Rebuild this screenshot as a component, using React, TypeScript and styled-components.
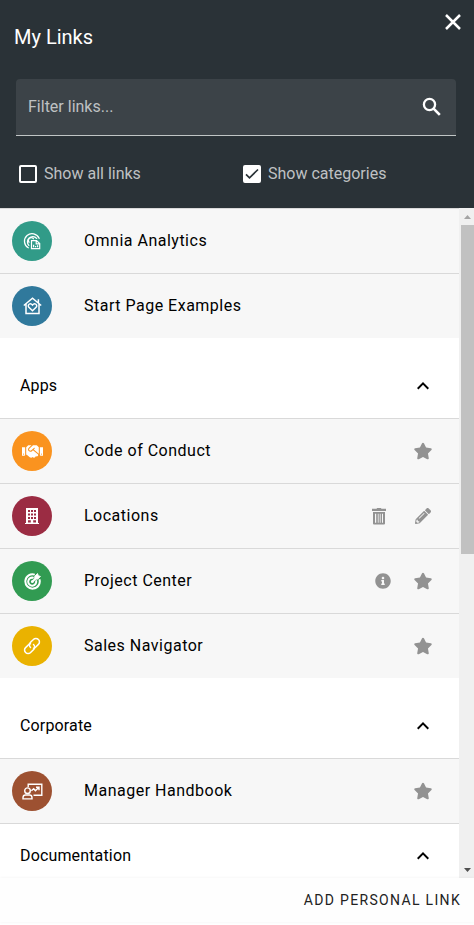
import React from "react";
import styled, { createGlobalStyle } from "styled-components";
import { FaHandshake, FaStar, FaPencilAlt, FaInfoCircle } from "react-icons/fa";
import { MdKeyboardArrowUp } from "react-icons/md";

const GlobalStyle = createGlobalStyle`
  *, *::before, *::after { box-sizing: border-box; }
  body { margin: 0; background: #fff; font-family: Roboto, "Liberation Sans", sans-serif; }
  svg { display: block; }
`;

const Panel = styled.main`
  width: 474px;
  height: 925px;
  display: flex;
  flex-direction: column;
  background: #fff;
  overflow: hidden;
`;

const Header = styled.header`
  position: relative;
  flex: none;
  height: 208px;
  padding: 24px 18px 0 14px;
  background: #2a3237;
  color: #fff;
`;

const Title = styled.h1`
  margin: 0;
  font-size: 20px;
  line-height: 26px;
  font-weight: 400;
`;

const CloseButton = styled.button`
  position: absolute;
  top: 9px;
  right: 8px;
  padding: 0;
  border: 0;
  background: none;
  color: #fff;
`;

const Search = styled.div`
  display: flex;
  align-items: center;
  justify-content: space-between;
  height: 57px;
  margin: 29px 0 0 2px;
  padding: 0 12px;
  border-bottom: 1px solid #c0c5c5;
  border-radius: 4px 4px 0 0;
  background: #3c4348;
  color: #fff;
`;

const Placeholder = styled.span`
  color: #bfc1c3;
  font-size: 16px;
  line-height: 20px;
  margin-top: -1px;
`;

const Options = styled.div`
  display: grid;
  grid-template-columns: 224px 1fr;
  margin: 28px 0 0 5px;
`;

const Option = styled.div`
  display: flex;
  align-items: center;
  gap: 7px;
  height: 20px;
  color: #bfc1c3;
  font-size: 16px;
  line-height: 20px;
`;

const Box = styled.span<{ $checked?: boolean }>`
  display: flex;
  align-items: center;
  justify-content: center;
  width: 18px;
  height: 18px;
  border: 2px solid #fff;
  border-radius: 2px;
  background: ${(p) => (p.$checked ? "#fff" : "transparent")};
  color: #2a3237;
`;

const Body = styled.div`
  display: flex;
  flex: none;
  height: 670px;
`;

const List = styled.div`
  width: 459px;
  overflow: hidden;
`;

const Group = styled.section`
  & + & { padding-top: 16px; }
  &:last-child { padding-top: 0; border-top: 1px solid #d9d9d9; }
`;

const GroupHeader = styled.div`
  display: flex;
  align-items: center;
  justify-content: space-between;
  height: 64px;
  padding: 0 24px 0 20px;
  color: #000;
  font-size: 16px;
`;

const Label = styled.span`
  margin-top: -2px;
  letter-spacing: 0.15px;
`;

const Row = styled.div`
  display: flex;
  align-items: center;
  height: 65px;
  padding: 0 27px 0 12px;
  border-top: 1px solid #d9d9d9;
  background: #f7f7f7;
`;

const Badge = styled.span<{ $color: string }>`
  display: flex;
  align-items: center;
  justify-content: center;
  width: 40px;
  height: 40px;
  border-radius: 50%;
  background: ${(p) => p.$color};
  color: #fff;
`;

const Name = styled.span`
  flex: 1;
  margin-left: 32px;
  font-size: 16px;
  line-height: 20px;
  letter-spacing: 0.5px;
  color: #000;
`;

const Actions = styled.span`
  display: flex;
  align-items: center;
  color: #929292;
`;

const Action = styled.span<{ $gap?: number }>`
  margin-right: ${(p) => p.$gap ?? 0}px;
`;

const Scrollbar = styled.div`
  display: flex;
  flex-direction: column;
  width: 15px;
  padding-left: 2px;
  background: #f0f0f0;
`;

const ArrowSlot = styled.div`
  display: flex;
  align-items: center;
  justify-content: center;
  height: 17px;
`;

const Thumb = styled.div`
  height: 329px;
  margin-bottom: auto;
  background: #c1c1c1;
`;

const Footer = styled.footer`
  position: relative;
  flex: none;
  display: flex;
  align-items: center;
  justify-content: flex-end;
  height: 44px;
  padding-right: 13px;
  background: #fefefe;
  box-shadow: 0 0 3px rgba(0, 0, 0, 0.06);
`;

const AddLink = styled.button`
  padding: 0;
  border: 0;
  background: none;
  color: #222;
  font: 400 14px/20px Roboto, sans-serif;
  letter-spacing: 1.33px;
`;

const Line = styled.svg.attrs({ fill: "none", stroke: "currentColor" })``;

const CloseIcon = () => (
  <Line width="26" height="26" viewBox="0 0 26 26" strokeWidth="2.5">
    <path d="M6 6l14 14M20 6 6 20" />
  </Line>
);

const SearchIcon = () => (
  <Line width="24" height="24" viewBox="0 0 24 24" strokeWidth="2.3">
    <circle cx="9.500" cy="9.500" r="5.600" />
    <path d="m13.600 13.600 6.200 6.200" strokeWidth="2.600" />
  </Line>
);

const AnalyticsIcon = () => (
  <Line width="18" height="18" viewBox="0 0 18 18" strokeWidth="1.3" strokeLinecap="round">
    <path d="M5.300 15.800A7.600 7.600 0 1 1 16.100 6.300M5.800 13.400a5.100 5.100 0 1 1 7.800-7M6 10.200a2.700 2.700 0 0 1 4.400-3.500" />
    <path d="M8.500 8.600h5l3.200 3v5.100H8.500zM13.200 8.600v3.200h3.500M10.600 15.200v-2.500M12.600 15.200v-1.300M14.600 15.200v-2" strokeLinecap="butt" strokeWidth="1.200" />
  </Line>
);

const HomeHeartIcon = () => (
  <Line width="19" height="18" viewBox="0 0 19 18" strokeWidth="1.5">
    <path d="M.8 8.500 9.500 1.200l8.700 7.300M3 6.800v9.700h13V6.800M15.400 6V2.200" />
    <path d="M9.500 13.800 5.900 10.300c-2-2.400 1.400-5 3.600-2.200 2.200-2.800 5.600-.2 3.600 2.200z" />
  </Line>
);

const BuildingIcon = () => (
  <svg width="14" height="16" viewBox="0 0 14 16" fill="currentColor">
    <path fillRule="evenodd" d="M1 0h12v15h1v1H0v-1h1zM3 2v2h2V2zM6 2v2h2V2zM9 2v2h2V2zM3 5.500v2h2v-2zM6 5.500v2h2v-2zM9 5.500v2h2v-2zM3 9v2h2V9zM6 9v2h2V9zM9 9v2h2V9zM3 12.300v2.200h2.800v-2.200zM8.200 12.300v2.200H11v-2.200z" />
  </svg>
);

const TargetIcon = () => (
  <Line width="17" height="17" viewBox="0 0 17 17" strokeWidth="2">
    <path d="M10.800 1.600A7.200 7.200 0 1 0 15.400 6.200M9.600 4.900A4 4 0 1 0 12 7.400M8.300 8.700l4-4" />
    <path d="m11 5.800-.300-2.400L13.600.6l.600 2.200 2.200.6-2.800 2.800z" fill="currentColor" strokeWidth="1" />
    <circle cx="8.300" cy="8.700" r="1.400" fill="currentColor" stroke="none" />
  </Line>
);

const ChainIcon = () => (
  <Line width="18" height="18" viewBox="0 0 18 18" strokeWidth="1.5" strokeLinecap="round">
    <path d="M7.500 10.500a3.400 3.400 0 0 1-.2-4.900l3.100-3.100a3.400 3.400 0 0 1 5 0 3.400 3.400 0 0 1 0 4.900l-2.900 2.900a3.400 3.400 0 0 1-2 .9" />
    <path d="M10.500 7.500a3.400 3.400 0 0 1 .2 4.900l-3.100 3.100a3.400 3.400 0 0 1-5 0 3.400 3.400 0 0 1 0-4.900l2.900-2.900a3.400 3.400 0 0 1 2-.9" />
  </Line>
);

const PresenterIcon = () => (
  <Line width="21" height="17" viewBox="0 0 21 17" strokeWidth="1.4">
    <path d="M6.200 4V1.200h13.600v11H11.500" />
    <circle cx="5.500" cy="7.700" r="2.800" />
    <path d="M1 15.900v-1.200c0-1.900 1-2.700 2.500-2.700h4c1.500 0 2.500.8 2.500 2.700v1.200zM9.400 7.800l2.300-2 1.700 2 3.300-3.300M14 4.200h3v3" />
  </Line>
);

const TrashIcon = () => (
  <svg width="14" height="17" viewBox="0 0 14 17" fill="currentColor">
    <path fillRule="evenodd" d="M4.500.8 5.200 0h3.600l.7.8H14v2.200H0V.8zM1 4h12v11.500a1 1 0 0 1-1 1H2a1 1 0 0 1-1-1zm2 1.700V14.800h1.200V5.700zm2.800 0V14.800h.8V5.700zm2 0V14.800h.8V5.700zm2.200 0V14.800h1V5.700z" />
  </svg>
);

const Star = () => <Action><FaStar size={18} viewBox="12 0 552 512" /></Action>;

const links = {
  top: [
    { name: "Omnia Analytics", color: "#319b88", icon: <AnalyticsIcon /> },
    { name: "Start Page Examples", color: "#30799c", icon: <HomeHeartIcon /> },
  ],
  apps: [
    { name: "Code of Conduct", color: "#fa931f", icon: <FaHandshake size={21} />, actions: <Star /> },
    {
      name: "Locations",
      color: "#9b2c43",
      icon: <BuildingIcon />,
      actions: (
        <>
          <Action $gap={29}><TrashIcon /></Action>
          <Action $gap={1}><FaPencilAlt size={16} /></Action>
        </>
      ),
    },
    {
      name: "Project Center",
      color: "#319b52",
      icon: <TargetIcon />,
      actions: (
        <>
          <Action $gap={23}><FaInfoCircle size={16} /></Action>
          <Star />
        </>
      ),
    },
    { name: "Sales Navigator", color: "#eab200", icon: <ChainIcon />, actions: <Star /> },
  ],
  corporate: [
    { name: "Manager Handbook", color: "#9d5131", icon: <PresenterIcon />, actions: <Star /> },
  ],
};

type LinkItem = { name: string; color: string; icon: React.ReactNode; actions?: React.ReactNode };

function LinkGroup({ title, items = [] }: { title?: string; items?: LinkItem[] }) {
  return (
    <Group>
      {title && (
        <GroupHeader>
          <Label>{title}</Label>
          <MdKeyboardArrowUp size={24} />
        </GroupHeader>
      )}
      {items.map((item) => (
        <Row key={item.name}>
          <Badge $color={item.color}>{item.icon}</Badge>
          <Name>{item.name}</Name>
          <Actions>{item.actions}</Actions>
        </Row>
      ))}
    </Group>
  );
}

export default function App() {
  return (
    <>
      <GlobalStyle />
      <Panel>
        <Header>
          <Title>My Links</Title>
          <CloseButton aria-label="Close"><CloseIcon /></CloseButton>
          <Search>
            <Placeholder>Filter links...</Placeholder>
            <SearchIcon />
          </Search>
          <Options>
            <Option><Box />Show all links</Option>
            <Option>
              <Box $checked>
                <Line width="14" height="12" viewBox="0 0 14 12" strokeWidth="1.7">
                  <path d="m1 6.300 3.500 3.500L13 1.500" />
                </Line>
              </Box>
              Show categories
            </Option>
          </Options>
        </Header>
        <Body>
          <List>
            <LinkGroup items={links.top} />
            <LinkGroup title="Apps" items={links.apps} />
            <LinkGroup title="Corporate" items={links.corporate} />
            <LinkGroup title="Documentation" />
          </List>
          <Scrollbar>
            <ArrowSlot>
              <svg width="7" height="4" viewBox="0 0 7 4" fill="#a3a3a3"><path d="M3.500 0 7 4H0z" /></svg>
            </ArrowSlot>
            <Thumb />
            <ArrowSlot>
              <svg width="7" height="4" viewBox="0 0 7 4" fill="#505050"><path d="M0 0h7L3.500 4z" /></svg>
            </ArrowSlot>
          </Scrollbar>
        </Body>
        <Footer><AddLink>ADD PERSONAL LINK</AddLink></Footer>
      </Panel>
    </>
  );
}
